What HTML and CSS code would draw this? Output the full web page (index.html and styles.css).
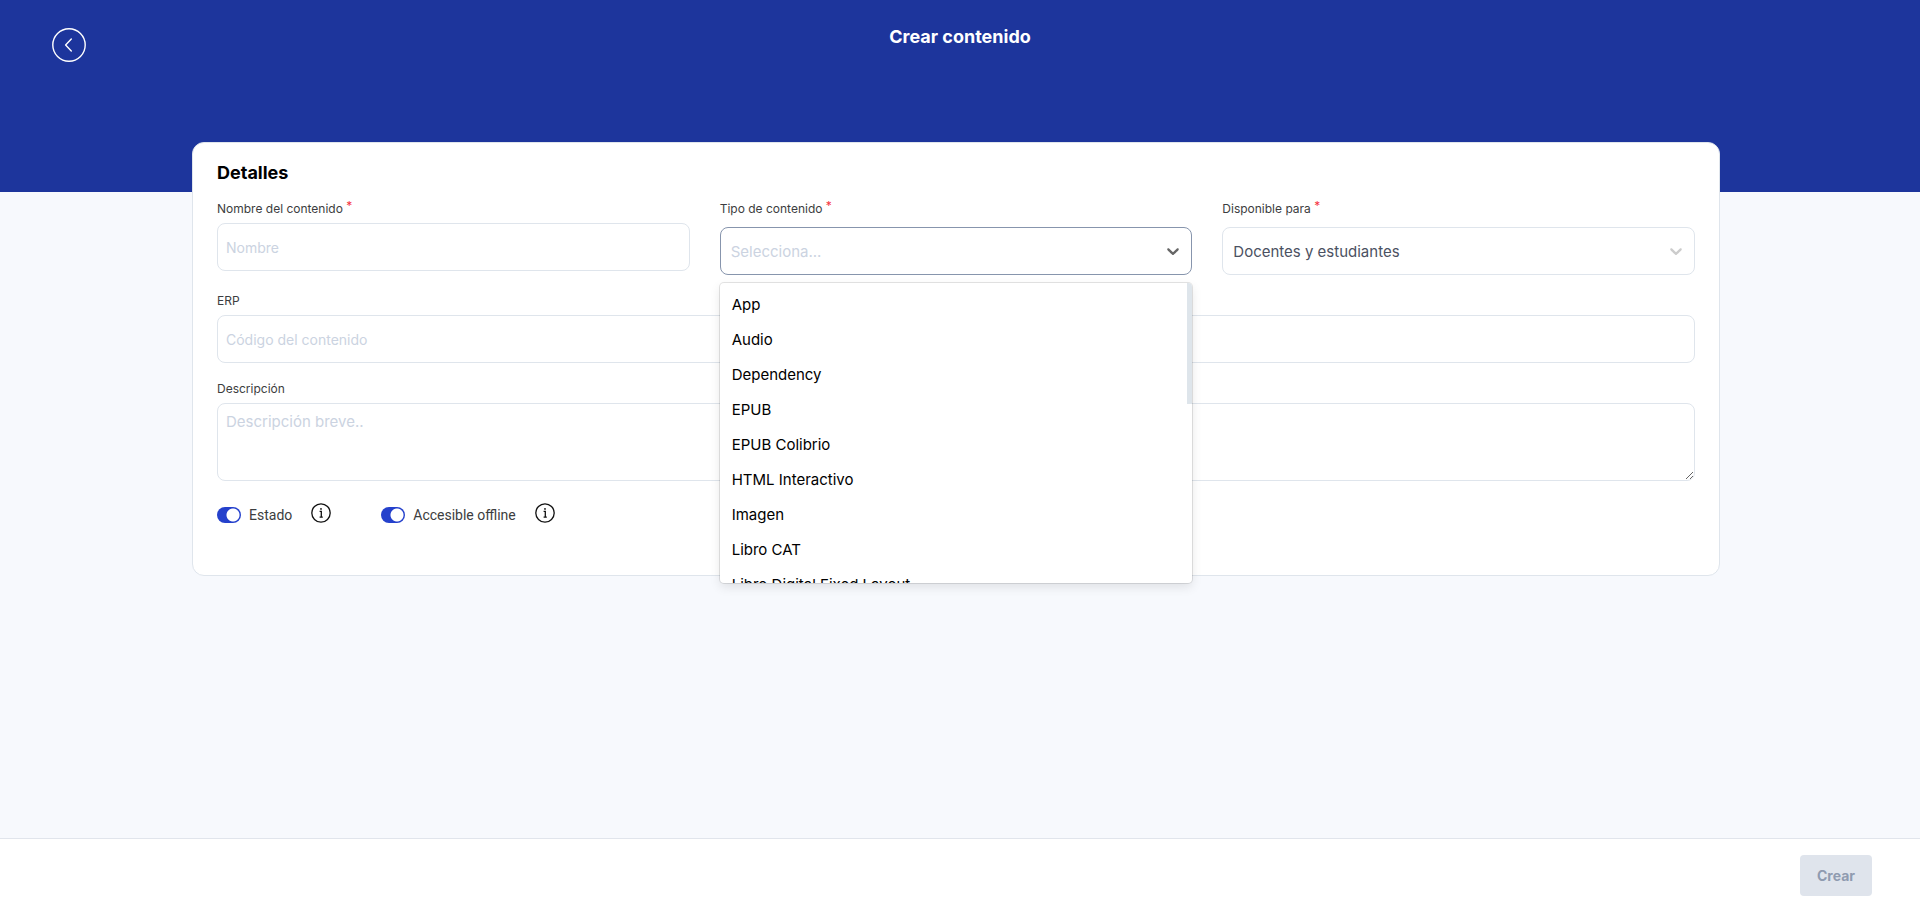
FILE: index.html
```html
<!doctype html>
<html lang="es">

<head>
	<meta charset="UTF-8">
	<meta name="viewport" content="width=device-width, initial-scale=1.0">
	<title>Crear contenido</title>
	<link rel="stylesheet" href="styles.css">
</head>

<body>
	<header class="topbar">
		<button type="button" class="back-btn" aria-label="Volver">
			<svg width="34" height="34" viewBox="0 0 34 34" fill="none" stroke="currentColor" stroke-width="1.4" stroke-linecap="round" stroke-linejoin="round">
				<circle cx="17" cy="17" r="16.2"/>
				<path d="M19.3 11 13.6 17l5.7 6"/>
			</svg>
		</button>
		<h1>Crear contenido</h1>
	</header>

	<main class="content">
		<form class="card" id="content-form">
			<h2>Detalles</h2>

			<div class="row">
				<div class="field">
					<label for="name">Nombre del contenido <span class="required">*</span></label>
					<input type="text" id="name" class="control" placeholder="Nombre">
				</div>

				<div class="field">
					<label for="type">Tipo de contenido <span class="required">*</span></label>
					<div class="select focused">
						<select id="type" class="control empty">
							<option value="">Selecciona...</option>
						</select>
						<svg class="chevron" width="20" height="20" viewBox="0 0 20 20"><path d="M4.516 7.548c0.436-0.446 1.043-0.481 1.576 0l3.908 3.747 3.908-3.747c0.533-0.481 1.141-0.446 1.574 0 0.436 0.445 0.408 1.197 0 1.615-0.406 0.418-4.695 4.502-4.695 4.502-0.217 0.223-0.502 0.335-0.787 0.335s-0.57-0.112-0.789-0.335c0 0-4.287-4.084-4.695-4.502s-0.436-1.17 0-1.615z"/></svg>
						<div class="menu">
							<ul class="menu-list" role="listbox" aria-label="Tipo de contenido">
								<li role="option">App</li>
								<li role="option">Audio</li>
								<li role="option">Dependency</li>
								<li role="option">EPUB</li>
								<li role="option">EPUB Colibrio</li>
								<li role="option">HTML Interactivo</li>
								<li role="option">Imagen</li>
								<li role="option">Libro CAT</li>
								<li role="option">Libro Digital Fixed Layout</li>
							</ul>
							<span class="menu-thumb"></span>
						</div>
					</div>
				</div>

				<div class="field">
					<label for="audience">Disponible para <span class="required">*</span></label>
					<div class="select">
						<select id="audience" class="control">
							<option>Docentes y estudiantes</option>
						</select>
						<svg class="chevron" width="20" height="20" viewBox="0 0 20 20"><path d="M4.516 7.548c0.436-0.446 1.043-0.481 1.576 0l3.908 3.747 3.908-3.747c0.533-0.481 1.141-0.446 1.574 0 0.436 0.445 0.408 1.197 0 1.615-0.406 0.418-4.695 4.502-4.695 4.502-0.217 0.223-0.502 0.335-0.787 0.335s-0.57-0.112-0.789-0.335c0 0-4.287-4.084-4.695-4.502s-0.436-1.17 0-1.615z"/></svg>
					</div>
				</div>
			</div>

			<div class="field">
				<label for="erp">ERP</label>
				<input type="text" id="erp" class="control" placeholder="Código del contenido">
			</div>

			<div class="field">
				<label for="description">Descripción</label>
				<textarea id="description" class="control" placeholder="Descripción breve.."></textarea>
			</div>

			<div class="switches">
				<div class="switch-group">
					<label class="switch">
						<input type="checkbox" role="switch" checked>
						Estado
					</label>
					<button type="button" class="info-btn" aria-label="Información sobre el estado">
						<svg width="20" height="20" viewBox="0 0 20 20" fill="none" stroke="currentColor" stroke-width="1.3">
							<circle cx="10" cy="10" r="9.2"/>
							<path d="M8.6 8.4h1.7v5.6M8.6 14.2h3.2"/>
							<circle cx="10" cy="5.9" r="0.9" fill="currentColor" stroke="none"/>
						</svg>
					</button>
				</div>
				<div class="switch-group">
					<label class="switch">
						<input type="checkbox" role="switch" checked>
						Accesible offline
					</label>
					<button type="button" class="info-btn" aria-label="Información sobre el acceso offline">
						<svg width="20" height="20" viewBox="0 0 20 20" fill="none" stroke="currentColor" stroke-width="1.3">
							<circle cx="10" cy="10" r="9.2"/>
							<path d="M8.6 8.4h1.7v5.6M8.6 14.2h3.2"/>
							<circle cx="10" cy="5.9" r="0.9" fill="currentColor" stroke="none"/>
						</svg>
					</button>
				</div>
			</div>
		</form>
	</main>

	<footer class="actions">
		<button type="submit" form="content-form" class="submit-btn" disabled>Crear</button>
	</footer>
</body>

</html>
```
FILE: styles.css
```css
:root {
	--brand: #1d359c;
	--switch: #2541cc;
	--page-bg: #f7f9fd;
	--border: #dfe5ec;
	--border-focus: #8795ad;
	--placeholder: #cbd3e1;
	--label: #3c3d40;
	--text: #4b5162;
}

* {
	box-sizing: border-box;
	margin: 0;
	padding: 0;
}

body {
	display: flex;
	flex-direction: column;
	min-height: 100vh;
	background: var(--page-bg);
	color: #000;
	font-family: Inter, "Liberation Sans", sans-serif;
	font-size: 15px;
}

button,
input,
select,
textarea {
	font: inherit;
}

/* Top bar */
.topbar {
	display: grid;
	grid-template-columns: 1fr auto 1fr;
	align-items: start;
	height: 192px;
	padding: 25px 52px;
	background: var(--brand);
	color: #fff;
}

.topbar h1 {
	font-size: 18px;
	line-height: 24px;
	font-weight: 700;
}

.back-btn {
	width: 34px;
	height: 34px;
	margin-top: 3px;
	border: 0;
	background: none;
	color: inherit;
	cursor: pointer;
}

.back-btn svg,
.info-btn svg {
	display: block;
}

/* Card */
.content {
	flex: 1;
	margin-top: -50px;
	padding: 0 200px 48px 192px;
}

.card {
	position: relative;
	padding: 18px 24px 48px;
	background: #fff;
	border: 1px solid var(--border);
	border-radius: 12px;
}

.card h2 {
	margin-bottom: 16px;
	font-size: 18px;
	line-height: 24px;
	font-weight: 700;
}

.row {
	display: grid;
	grid-template-columns: repeat(3, 1fr);
	gap: 30px;
}

.field {
	margin-bottom: 18px;
}

.field > label {
	display: block;
	margin-bottom: 6px;
	font-size: 12px;
	line-height: 16px;
	color: var(--label);
}

.required {
	position: relative;
	top: -3px;
	color: #f5333f;
}

.control {
	display: block;
	width: 100%;
	height: 48px;
	padding: 0 8px;
	background: #fff;
	border: 1px solid var(--border);
	border-radius: 8px;
	color: var(--text);
	font-size: 14px;
	outline: none;
}

.control::placeholder {
	color: var(--placeholder);
	opacity: 1;
}

textarea.control {
	height: 78px;
	padding: 8px;
	font-size: 15px;
	line-height: 20px;
	resize: vertical;
}

/* Selects */
.select {
	position: relative;
	margin-top: 10px;
}

.select .control {
	padding: 0 40px 0 10px;
	font-size: 15px;
	appearance: none;
}

.select .empty {
	color: var(--placeholder);
}

.select.focused .control {
	border-color: var(--border-focus);
}

.chevron {
	position: absolute;
	top: 14px;
	right: 9px;
	fill: #ccc;
	pointer-events: none;
}

.focused .chevron {
	fill: #666;
}

.menu {
	position: absolute;
	top: 100%;
	left: 0;
	z-index: 10;
	width: 100%;
	margin-top: 8px;
	overflow: hidden;
	background: #fff;
	border-radius: 4px;
	box-shadow: 0 0 0 1px rgba(0, 0, 0, 0.1), 0 4px 11px rgba(0, 0, 0, 0.1);
}

.menu-list {
	max-height: 300px;
	padding: 4px 0;
	overflow: hidden;
	list-style: none;
}

.menu-list li {
	height: 35px;
	padding: 0 12px;
	line-height: 35px;
}

.menu-thumb {
	position: absolute;
	top: 0;
	right: 0;
	width: 5px;
	height: 121px;
	background: #dee5eb;
}

/* Switches */
.switches {
	display: flex;
	gap: 50px;
	margin-top: 22px;
}

.switch-group {
	display: flex;
	align-items: flex-start;
	gap: 19px;
}

.switch {
	display: flex;
	align-items: center;
	gap: 8px;
	height: 24px;
	color: var(--label);
	font-family: Roboto, "Liberation Sans", sans-serif;
	font-size: 14px;
}

.switch input {
	width: 24px;
	height: 16px;
	border-radius: 8px;
	background: radial-gradient(circle at 16px 8px, #fff 6px, transparent 7px) var(--switch);
	appearance: none;
	cursor: pointer;
}

.info-btn {
	border: 0;
	background: none;
	color: #111;
	cursor: pointer;
}

/* Footer */
.actions {
	display: flex;
	justify-content: flex-end;
	padding: 16px 48px 15px;
	background: #fff;
	border-top: 1px solid #e1e5ec;
}

.submit-btn {
	width: 72px;
	height: 41px;
	border: 0;
	border-radius: 4px;
	background: #dfe4ec;
	color: #8f9bb0;
	font-size: 14px;
	font-weight: 700;
}
```
